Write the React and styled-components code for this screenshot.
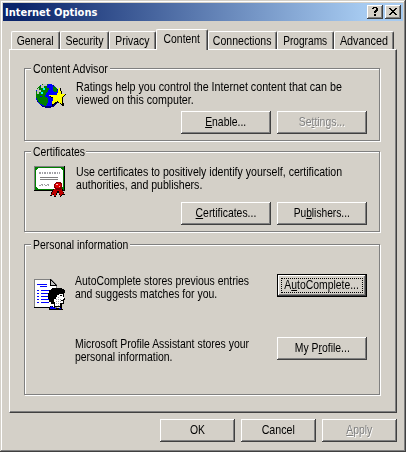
import React from 'react';
import styled, { createGlobalStyle, css } from 'styled-components';

const face = '#d4d0c8';
const shadow = '#808080';
const dark = '#404040';

const GlobalStyle = createGlobalStyle`
  * {
    box-sizing: border-box;
  }
  body {
    margin: 0;
    background: ${face};
    font-family: 'Liberation Sans', sans-serif;
    font-size: 13px;
    line-height: 13px;
    color: #000;
  }
`;

const Dialog = styled.div`
  width: 406px;
  height: 452px;
  padding: 3px;
  background: ${face};
  box-shadow: inset -1px -1px 0 ${dark}, inset 1px 1px 0 ${face}, inset -2px -2px 0 ${shadow}, inset 2px 2px 0 #fff;
`;

const TitleBar = styled.div`
  display: flex;
  align-items: center;
  height: 18px;
  padding: 0 2px;
  background: linear-gradient(to right, #0a246a 4%, #a6caf0 90%);
`;

const Title = styled.div`
  flex: 1;
  color: #fff;
  font-family: 'DejaVu Sans Condensed', 'DejaVu Sans', sans-serif;
  font-stretch: condensed;
  font-weight: bold;
  font-size: 11px;
  white-space: nowrap;
`;

const CaptionButton = styled.button`
  display: flex;
  align-items: center;
  justify-content: center;
  width: 16px;
  height: 14px;
  margin-left: ${p => p.$gap || 0}px;
  padding: 0 1px 1px 0;
  border: none;
  background: ${face};
  box-shadow: inset -1px -1px 0 ${dark}, inset 1px 1px 0 #fff, inset -2px -2px 0 ${shadow};
`;

// narrow ui lettering
const Narrow = styled.span`
  display: inline-block;
  flex: none;
  white-space: pre;
  transform: scaleX(${p => p.$scale || 0.8});
  transform-origin: ${p => p.$origin || 'center'};
  u {
    text-underline-offset: 1px;
    text-decoration-thickness: 1px;
  }
`;

const Tabs = styled.div`
  display: flex;
  align-items: flex-end;
  height: 28px;
  padding-left: 8px;
`;

const Tab = styled.div`
  display: flex;
  flex: none;
  justify-content: center;
  width: ${p => p.$width}px;
  height: 18px;
  padding-top: 2px;
  border: 1px solid #fff;
  border-right-color: ${dark};
  border-bottom: none;
  border-radius: 2px 2px 0 0;
  box-shadow: inset -1px 0 0 ${shadow};
  ${p => p.$active && css`
    z-index: 1;
    height: 21px;
    margin-bottom: -1px;
    background: ${face};
  `}
`;

const Page = styled.div`
  width: 388px;
  height: 364px;
  margin-left: 6px;
  padding: 18px 16px 0 14px;
  border: 1px solid #fff;
  border-right-color: ${dark};
  border-bottom-color: ${dark};
  box-shadow: inset -1px -1px 0 ${shadow};
`;

const Group = styled.div`
  width: 356px;
  height: ${p => p.$height}px;
  margin-bottom: ${p => p.$gap || 0}px;
  border: 1px solid ${shadow};
  box-shadow: 1px 1px 0 #fff, inset 1px 1px 0 #fff;
`;

const Legend = styled.div`
  display: flex;
  width: ${p => p.$width}px;
  margin: -7px 0 0 6px;
  padding-left: 2px;
  background: ${face};
`;

const Row = styled.div`
  display: flex;
  align-items: flex-start;
  height: ${p => p.$height}px;
  margin-top: ${p => p.$top}px;
  padding: 0 12px 0 9px;
`;

const IconSlot = styled.div`
  flex: none;
  width: 41px;
  height: 32px;
  padding-top: ${p => p.$top || 0}px;
  svg {
    display: block;
  }
`;

const Text = styled.div`
  display: flex;
  flex: 1;
  min-width: 0;
  margin-left: ${p => p.$shift || 0}px;
`;

const ButtonRow = styled.div`
  display: flex;
  justify-content: flex-end;
  gap: 6px;
  margin-top: ${p => p.$top || 0}px;
  padding-right: ${p => p.$right}px;
`;

const Button = styled.button`
  display: flex;
  flex: none;
  align-items: center;
  justify-content: center;
  width: ${p => p.$width || 90}px;
  height: 23px;
  padding: 0 0 2px;
  border: none;
  background: ${face};
  color: #000;
  font: inherit;
  box-shadow: inset -1px -1px 0 ${dark}, inset 1px 1px 0 #fff, inset -2px -2px 0 ${shadow};
  &:disabled {
    color: ${shadow};
    text-shadow: 1px 1px 0 #fff;
  }
  ${p => p.$focused && css`
    border: 1px solid #000;
    outline: 1px dotted #000;
    outline-offset: -5px;
  `}
`;

const GlobeIcon = () => (
  <svg width="33" height="26" viewBox="-0.5 0 33 26" shapeRendering="crispEdges">
    <circle cx="13.5" cy="13" r="12" fill="#000080" />
    <circle cx="12.5" cy="12" r="11.5" fill="#0000ff" />
    <path d="M3 5L8 1H14L12 4L15 6L12 10L10 14L6 13L3 16L1 12Z" fill="#008000" />
    <path d="M1 13L6 14L9 13L13 15L14 19L11 23L8 22L4 19Z" fill="#008000" />
    <path d="M18 2L22 5L23 9H20L18 6Z" fill="#008000" />
    <path d="M2 7L4 5V7H6V9H4V11H2ZM6 3L9 1H12V3H9V5H6Z" fill="#c0c0c0" />
    <path d="M8 5H10V7H8ZM6 9H8V11H6Z" fill="#00ffff" />
    <path d="M26 5L28 11H32L28 15L30 24L23 19L17 24L19 16L15 13L23 12Z" fill="#000" />
    <path d="M25 5L27 11H31L27 15L28 22L23 18L17 22L19 15L14 12H22Z" fill="#ffff00" />
  </svg>
);

const CertificateIcon = () => (
  <svg width="32" height="33" viewBox="0 0 32 33" shapeRendering="crispEdges">
    <path d="M0 0H31V25H0Z" fill="#000" />
    <path d="M0 0H30V24H0Z" fill="#808080" />
    <path d="M1 1H30V24H1Z" fill="#008000" />
    <path d="M4 2H27V3H28V4H29V21H28V22H27V23H4V22H3V21H2V4H3V3H4Z" fill="#fff" />
    <path d="M6 11.5H24M6 13.5H24" stroke="#808080" />
    <path d="M5 6.5H26M5 7.5H26" stroke="#a0a0a4" strokeDasharray="2 1 1 1" />
    <path d="M5 19.5H15M7 18.5H15" stroke="#a0a0a4" strokeDasharray="2 1 1 2" />
    <path d="M19 23L16 30L20 29L21 32L24 26L27 32L28 29H31L28 22Z" fill="#000" />
    <path d="M20 23L17 29L20 28L21 31L24 24L27 31L28 28H30L27 22Z" fill="#c00000" />
    <path d="M22 16H26L28 18V22L26 24H22L20 22V18Z" fill="#800000" />
    <path d="M22 17H26V18H27V21H26V22H22V21H21V18H22Z" fill="#e00000" />
    <path d="M22 18H24V19H22ZM25 20H26V21H25Z" fill="#ffc0c0" />
  </svg>
);

const ProfileIcon = () => (
  <svg width="32" height="32" viewBox="0 0 32 32" shapeRendering="crispEdges">
    <path d="M0 0H17L23 6V29H0Z" fill="#808080" />
    <path d="M1 1H16L22 7V28H1Z" fill="#fff" />
    <path d="M0 28H20V29H0Z" fill="#000" />
    <path d="M16 0H17V1H18V2H19V3H20V4H21V5H22V6H23V7H16Z" fill="#000" />
    <path d="M17 2H18V3H19V4H20V5H21V6H17Z" fill="#c0c0c0" />
    <path d="M3 5.5H13M6 7.5H13M3 11.5H5M7 11.5H15M3 14.5H5M7 14.5H15M3 17.5H5M7 17.5H14M3 20.5H5M7 20.5H15M3 23.5H5M7 23.5H15" stroke="#0000ff" />
    <path d="M18 9H28V10H30V11H31V14H30V19H31V21H30V25H28V28H20V25H17V23H15V20H14V14H15V11H17V10H18Z" fill="#000" />
    <path d="M25 15H29V18H30V20H29V24H26V27H21V23H20V20H22V18H23V16H25Z" fill="#fff" />
    <path d="M22 20H23V21H22ZM24 18H25V19H24ZM24 20H25V21H24ZM24 22H25V23H24ZM22 22H23V23H22ZM22 24H23V25H22ZM26 20H27V21H26ZM26 22H27V23H26ZM24 24H25V25H24ZM24 26H25V27H24Z" fill="#a0a0a4" />
    <path d="M26 16H28V17H26ZM27 21H29V22H27Z" fill="#000" />
    <path d="M16 27H19V28H21V29H26V28H28V30H29V31H15V29H16Z" fill="#000" />
    <path d="M17 27H18V28H20V29H22V30H16V28H17ZM25 29H27V30H25Z" fill="#0000ff" />
  </svg>
);

const App = () => (
  <>
    <GlobalStyle />
    <Dialog>
      <TitleBar>
        <Title>Internet Options</Title>
        <CaptionButton>
          <svg width="6" height="9" viewBox="0 0 6 9" shapeRendering="crispEdges">
            <path d="M1 0H5V1H6V4H5V5H4V6H2V4H3V3H4V1H2V2H0V1H1ZM2 7H4V9H2Z" />
          </svg>
        </CaptionButton>
        <CaptionButton $gap={2}>
          <svg width="8" height="7" viewBox="0 0 8 7" shapeRendering="crispEdges">
            <path d="M0 0H2V1H3V2H5V1H6V0H8V1H7V2H6V3H5V4H6V5H7V6H8V7H6V6H5V5H3V6H2V7H0V6H1V5H2V4H3V3H2V2H1V1H0Z" />
          </svg>
        </CaptionButton>
      </TitleBar>
      <Tabs>
        <Tab $width={49}><Narrow>General</Narrow></Tab>
        <Tab $width={49}><Narrow $scale={0.81}>Security</Narrow></Tab>
        <Tab $width={47}><Narrow>Privacy</Narrow></Tab>
        <Tab $width={52} $active><Narrow>Content</Narrow></Tab>
        <Tab $width={69}><Narrow $scale={0.81}>Connections</Narrow></Tab>
        <Tab $width={57}><Narrow $scale={0.78}>Programs</Narrow></Tab>
        <Tab $width={60}><Narrow $scale={0.83}>Advanced</Narrow></Tab>
      </Tabs>
      <Page>
        <Group $height={73} $gap={10}>
          <Legend $width={79}><Narrow $origin="left" $scale={0.815}>Content Advisor</Narrow></Legend>
          <Row $top={5} $height={31}>
            <IconSlot $top={3}><GlobeIcon /></IconSlot>
            <Text $shift={1}>
              <Narrow $origin="left" $scale={0.823}>{'Ratings help you control the Internet content that can be\nviewed on this computer.'}</Narrow>
            </Text>
          </Row>
          <ButtonRow $right={12}>
            <Button><Narrow><u>E</u>nable...</Narrow></Button>
            <Button disabled><Narrow>Se<u>t</u>tings...</Narrow></Button>
          </ButtonRow>
        </Group>
        <Group $height={81} $gap={12}>
          <Legend $width={55}><Narrow $origin="left">Certificates</Narrow></Legend>
          <Row $top={7} $height={37}>
            <IconSlot $top={1}><CertificateIcon /></IconSlot>
            <Text $shift={1}>
              <Narrow $origin="left" $scale={0.813}>{'Use certificates to positively identify yourself, certification\nauthorities, and publishers.'}</Narrow>
            </Text>
          </Row>
          <ButtonRow $right={12}>
            <Button><Narrow><u>C</u>ertificates...</Narrow></Button>
            <Button><Narrow $scale={0.785}>Pu<u>b</u>lishers...</Narrow></Button>
          </ButtonRow>
        </Group>
        <Group $height={151}>
          <Legend $width={99}><Narrow $origin="left">Personal information</Narrow></Legend>
          <Row $top={23} $height={63}>
            <IconSlot $top={5}><ProfileIcon /></IconSlot>
            <Text>
              <Narrow $origin="left" $scale={0.803}>{'AutoComplete stores previous entries\nand suggests matches for you.'}</Narrow>
            </Text>
            <Button $focused><Narrow>A<u>u</u>toComplete...</Narrow></Button>
          </Row>
          <Row $top={0} $height={40}>
            <IconSlot />
            <Text>
              <Narrow $origin="left" $scale={0.803}>{'Microsoft Profile Assistant stores your\npersonal information.'}</Narrow>
            </Text>
            <Button><Narrow>My P<u>r</u>ofile...</Narrow></Button>
          </Row>
        </Group>
      </Page>
      <ButtonRow $top={6} $right={6}>
        <Button $width={75}><Narrow>OK</Narrow></Button>
        <Button $width={75}><Narrow $scale={0.82}>Cancel</Narrow></Button>
        <Button $width={75} disabled><Narrow><u>A</u>pply</Narrow></Button>
      </ButtonRow>
    </Dialog>
  </>
);

export default App;
